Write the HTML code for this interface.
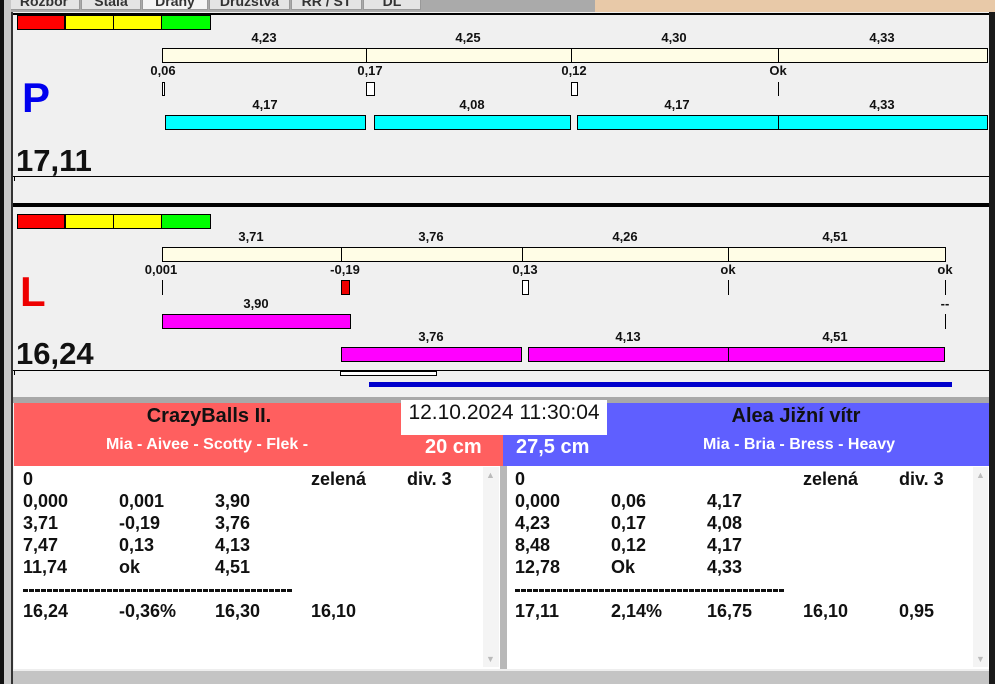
<!DOCTYPE html>
<html><head><meta charset="utf-8"><style>
*{margin:0;padding:0;box-sizing:border-box}
body{width:995px;height:684px;overflow:hidden;background:#f0f0f0;position:relative;font-family:"Liberation Sans",Arial,sans-serif}
div{position:absolute}
.t{font-weight:bold;font-size:13px;color:#111;transform:translateX(-50%);white-space:nowrap;line-height:14px}
.cr{background:#fffde6;border:1px solid #000}
.cy{background:#00ffff;border:1px solid #000}
.mg{background:#ff00ff;border:1px solid #000}
.vl{width:1px;background:#000}
.tab{top:-3px;height:13px;background:#e4e4e4;border:1px solid #999;font-size:14px;font-weight:bold;color:#333;line-height:6px;text-align:center;overflow:hidden}
.row{font-weight:bold;font-size:18px;color:#111;line-height:22px;white-space:nowrap}
.row span{position:absolute}
.dash{height:3px;width:270px;background:repeating-linear-gradient(90deg,#111 0 5px,transparent 5px 6px)}
</style></head><body>
<div style="left:0;top:0;width:995px;height:12px;background:#e8c9a8"></div>
<div style="left:0;top:0;width:595px;height:12px;background:#aaa"></div>
<div class="tab" style="left:8px;width:72px">Rozbor</div>
<div class="tab" style="left:81px;width:60px">Stála</div>
<div class="tab" style="left:142px;width:66px;background:#f4f4f4">Dráhy</div>
<div class="tab" style="left:209px;width:81px">Družstva</div>
<div class="tab" style="left:291px;width:71px">RR / ST</div>
<div class="tab" style="left:363px;width:58px">DL</div>
<div style="left:0;top:0;width:4px;height:684px;background:#111"></div>
<div style="left:4px;top:0;width:7px;height:684px;background:#c8c8c8"></div>
<div style="left:11px;top:12px;width:2px;height:672px;background:#333"></div>
<div style="left:989px;top:12px;width:6px;height:672px;background:#1a1a1a"></div>
<div style="left:13px;top:13px;width:976px;height:2px;background:#000"></div>

<div style="left:17px;top:15px;width:48px;height:15px;background:#f00;border:1px solid #000"></div>
<div style="left:65px;top:15px;width:49px;height:15px;background:#ff0;border:1px solid #000"></div>
<div style="left:113px;top:15px;width:49px;height:15px;background:#ff0;border:1px solid #000"></div>
<div style="left:161px;top:15px;width:50px;height:15px;background:#0f0;border:1px solid #000"></div>
<div class="t" style="left:264px;top:31px">4,23</div>
<div class="t" style="left:468px;top:31px">4,25</div>
<div class="t" style="left:674px;top:31px">4,30</div>
<div class="t" style="left:882px;top:31px">4,33</div>
<div class="cr" style="left:162px;top:48px;width:826px;height:15px"></div>
<div class="vl" style="left:366px;top:48px;height:15px"></div>
<div class="vl" style="left:571px;top:48px;height:15px"></div>
<div class="vl" style="left:778px;top:48px;height:15px"></div>
<div class="t" style="left:163px;top:64px">0,06</div>
<div class="t" style="left:370px;top:64px">0,17</div>
<div class="t" style="left:574px;top:64px">0,12</div>
<div class="t" style="left:778px;top:64px">Ok</div>
<div style="left:162px;top:82px;width:3px;height:14px;border:1px solid #000;background:#fff"></div>
<div style="left:366px;top:82px;width:9px;height:14px;border:1px solid #000;background:#fff"></div>
<div style="left:571px;top:82px;width:7px;height:14px;border:1px solid #000;background:#fff"></div>
<div class="vl" style="left:778px;top:82px;height:14px"></div>
<div style="left:22px;top:74px;font-size:42px;font-weight:bold;color:#0000ee">P</div>
<div class="t" style="left:265px;top:98px">4,17</div>
<div class="t" style="left:472px;top:98px">4,08</div>
<div class="t" style="left:677px;top:98px">4,17</div>
<div class="t" style="left:882px;top:98px">4,33</div>
<div class="cy" style="left:165px;top:115px;width:201px;height:15px"></div>
<div class="cy" style="left:374px;top:115px;width:197px;height:15px"></div>
<div class="cy" style="left:577px;top:115px;width:202px;height:15px"></div>
<div class="cy" style="left:778px;top:115px;width:210px;height:15px"></div>
<div style="left:16px;top:143px;font-size:31px;font-weight:bold;color:#111">17,11</div>
<div style="left:13px;top:176px;width:976px;height:1px;background:#000"></div>
<div style="left:14px;top:176px;width:1px;height:5px;background:#000"></div>
<div style="left:13px;top:203px;width:976px;height:4px;background:#000"></div>

<div style="left:17px;top:214px;width:48px;height:15px;background:#f00;border:1px solid #000"></div>
<div style="left:65px;top:214px;width:49px;height:15px;background:#ff0;border:1px solid #000"></div>
<div style="left:113px;top:214px;width:49px;height:15px;background:#ff0;border:1px solid #000"></div>
<div style="left:161px;top:214px;width:50px;height:15px;background:#0f0;border:1px solid #000"></div>
<div class="t" style="left:251px;top:230px">3,71</div>
<div class="t" style="left:431px;top:230px">3,76</div>
<div class="t" style="left:625px;top:230px">4,26</div>
<div class="t" style="left:835px;top:230px">4,51</div>
<div class="cr" style="left:162px;top:247px;width:784px;height:15px"></div>
<div class="vl" style="left:341px;top:247px;height:15px"></div>
<div class="vl" style="left:522px;top:247px;height:15px"></div>
<div class="vl" style="left:728px;top:247px;height:15px"></div>
<div class="t" style="left:161px;top:263px">0,001</div>
<div class="t" style="left:345px;top:263px">-0,19</div>
<div class="t" style="left:525px;top:263px">0,13</div>
<div class="t" style="left:728px;top:263px">ok</div>
<div class="t" style="left:945px;top:263px">ok</div>
<div class="vl" style="left:162px;top:280px;height:15px"></div>
<div style="left:341px;top:280px;width:9px;height:15px;border:1px solid #000;background:#e00"></div>
<div style="left:522px;top:280px;width:7px;height:15px;border:1px solid #000;background:#fff"></div>
<div class="vl" style="left:728px;top:280px;height:15px"></div>
<div class="vl" style="left:945px;top:280px;height:15px"></div>
<div class="t" style="left:945px;top:297px">--</div>
<div class="vl" style="left:945px;top:314px;height:15px"></div>
<div style="left:20px;top:268px;font-size:42px;font-weight:bold;color:#e00">L</div>
<div class="t" style="left:256px;top:297px">3,90</div>
<div class="mg" style="left:162px;top:314px;width:189px;height:15px"></div>
<div class="t" style="left:431px;top:330px">3,76</div>
<div class="t" style="left:628px;top:330px">4,13</div>
<div class="t" style="left:835px;top:330px">4,51</div>
<div class="mg" style="left:341px;top:347px;width:181px;height:15px"></div>
<div class="mg" style="left:528px;top:347px;width:201px;height:15px"></div>
<div class="mg" style="left:728px;top:347px;width:217px;height:15px"></div>
<div style="left:16px;top:336px;font-size:31px;font-weight:bold;color:#111">16,24</div>
<div style="left:13px;top:370px;width:976px;height:1px;background:#000"></div>
<div style="left:14px;top:370px;width:1px;height:5px;background:#000"></div>
<div style="left:340px;top:371px;width:97px;height:5px;border:1px solid #000;background:#fff"></div>
<div style="left:369px;top:382px;width:583px;height:5px;background:#0000cc"></div>

<div style="left:13px;top:397px;width:976px;height:6px;background:#a8a8a8"></div>
<div style="left:14px;top:403px;width:489px;height:63px;background:#ff5f5f"></div>
<div style="left:503px;top:403px;width:486px;height:63px;background:#5f5fff"></div>
<div style="left:14px;top:405px;width:390px;text-align:center;font-size:20px;font-weight:bold;color:#111">CrazyBalls II.</div>
<div style="left:7px;top:436px;width:400px;text-align:center;font-size:16px;font-weight:bold;color:#fff">Mia - Aivee - Scotty - Flek -</div>
<div style="left:425px;top:436px;font-size:20px;font-weight:bold;color:#fff">20 cm</div>
<div style="left:516px;top:436px;font-size:20px;font-weight:bold;color:#fff">27,5 cm</div>
<div style="left:666px;top:405px;width:260px;text-align:center;font-size:20px;font-weight:bold;color:#111">Alea Jižní vítr</div>
<div style="left:649px;top:436px;width:300px;text-align:center;font-size:16px;font-weight:bold;color:#fff">Mia - Bria - Bress - Heavy</div>
<div style="left:401px;top:400px;width:206px;height:35px;background:#fff;font-size:21px;color:#111;text-align:center;line-height:25px">12.10.2024 11:30:04</div>

<div style="left:14px;top:466px;width:486px;height:203px;background:#fff"></div>
<div style="left:483px;top:467px;width:16px;height:200px;background:#f4f4f4"></div>
<div style="left:486px;top:470px;font-size:9px;color:#bbb">▲</div>
<div style="left:486px;top:654px;font-size:9px;color:#bbb">▼</div>
<div style="left:500px;top:466px;width:7px;height:205px;background:#b8b8b8"></div>
<div style="left:507px;top:466px;width:482px;height:203px;background:#fff"></div>
<div style="left:973px;top:467px;width:15px;height:200px;background:#f4f4f4"></div>
<div style="left:976px;top:470px;font-size:9px;color:#bbb">▲</div>
<div style="left:976px;top:654px;font-size:9px;color:#bbb">▼</div>
<div style="left:13px;top:669px;width:976px;height:15px;background:#c4c4c4;border-top:2px solid #eee"></div>

<div class="row" style="left:23px;top:468px;width:470px;height:170px">
<span style="left:0;top:0">0</span><span style="left:288px;top:0">zelená</span><span style="left:384px;top:0">div. 3</span>
<span style="left:0;top:22px">0,000</span><span style="left:96px;top:22px">0,001</span><span style="left:192px;top:22px">3,90</span>
<span style="left:0;top:44px">3,71</span><span style="left:96px;top:44px">-0,19</span><span style="left:192px;top:44px">3,76</span>
<span style="left:0;top:66px">7,47</span><span style="left:96px;top:66px">0,13</span><span style="left:192px;top:66px">4,13</span>
<span style="left:0;top:88px">11,74</span><span style="left:96px;top:88px">ok</span><span style="left:192px;top:88px">4,51</span>
<span style="left:0;top:132px">16,24</span><span style="left:96px;top:132px">-0,36%</span><span style="left:192px;top:132px">16,30</span><span style="left:288px;top:132px">16,10</span>
</div>
<div class="dash" style="left:23px;top:589px"></div>
<div class="row" style="left:515px;top:468px;width:470px;height:170px">
<span style="left:0;top:0">0</span><span style="left:288px;top:0">zelená</span><span style="left:384px;top:0">div. 3</span>
<span style="left:0;top:22px">0,000</span><span style="left:96px;top:22px">0,06</span><span style="left:192px;top:22px">4,17</span>
<span style="left:0;top:44px">4,23</span><span style="left:96px;top:44px">0,17</span><span style="left:192px;top:44px">4,08</span>
<span style="left:0;top:66px">8,48</span><span style="left:96px;top:66px">0,12</span><span style="left:192px;top:66px">4,17</span>
<span style="left:0;top:88px">12,78</span><span style="left:96px;top:88px">Ok</span><span style="left:192px;top:88px">4,33</span>
<span style="left:0;top:132px">17,11</span><span style="left:96px;top:132px">2,14%</span><span style="left:192px;top:132px">16,75</span><span style="left:288px;top:132px">16,10</span><span style="left:384px;top:132px">0,95</span>
</div>
<div class="dash" style="left:515px;top:589px"></div>
</body></html>
